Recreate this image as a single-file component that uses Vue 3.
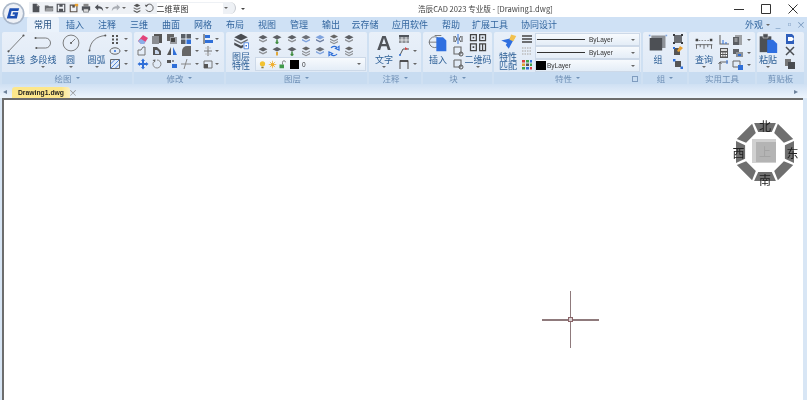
<script setup>
const b = '#2f6fd8'
const icons = {
  doc: `<path d="M2 1h5l3 3v7H2z" fill="#4f5258"/><path d="M7 1v3h3" fill="#bbb"/>`,
  folder: `<path d="M1 3h4l1 1h5v6H1z" fill="#6a6c70"/><path d="M3 6h8l-1 4H1z" fill="#9a9c9f"/>`,
  save: `<path d="M1.500 1.500h9v9h-9z" fill="none" stroke="#4f5258" stroke-width="1.400"/><path d="M4 1.500h4v3H4zM3.500 7h5v3.500h-5z" fill="#4f5258"/>`,
  saveas: `<path d="M1.500 2.500h8v8h-8z" fill="none" stroke="#5a5048" stroke-width="1.300"/><path d="M4 2.500h3v3H4z" fill="#5a5048"/><path d="M7 1h4v3H7z" fill="#e8a030"/>`,
  print: `<path d="M3 1h6v3H3z" fill="#888"/><path d="M1 4h10v5H1z" fill="#4f5258"/><path d="M3 7h6v4H3z" fill="#ddd" stroke="#4f5258" stroke-width=".7"/>`,
  undo: `<path d="M1 5l4-3.500V4c3 0 6 1 6 6-1-3-3-3.500-6-3.500V9z" fill="#4f5258"/>`,
  redo: `<path d="M11 5L7 1.500V4C4 4 1 5 1 10c1-3 3-3.500 6-3.500V9z" fill="#a9adb3"/>`,
  stack: `<path d="M6 1l4 2-4 2-4-2z" fill="#555"/><path d="M2 5l4 2 4-2v1.500L6 8.500 2 6.500z" fill="#777"/><path d="M2 8.500l4 2 4-2V10l-4 2-4-2z" fill="#555"/>`,
  arc: `<path d="M3 3a4.500 4.500 0 1 1-.5 5" fill="none" stroke="#555" stroke-width="1.100"/><path d="M1 2l4 .500L2.500 5z" fill="#555"/>`,
  dots: `<path d="M3 2h2v2H3zM7 2h2v2H7zM3 5.500h2v2H3zM7 5.500h2v2H7zM3 9h2v2H3zM7 9h2v2H7z" fill="#555"/>`,
  ellipse: `<ellipse cx="6" cy="6" rx="5" ry="3.200" fill="none" stroke="#666" stroke-width="1"/><circle cx="6" cy="6" r="1" fill="${b}"/>`,
  hatch: `<path d="M1.500 1.500h9v9h-9z" fill="none" stroke="#666" stroke-width="1"/><path d="M1.500 6l4.500-4.500M1.500 10.500l9-9M6 10.500l4.500-4.500" stroke="${b}" stroke-width=".8"/>`,
  eraser: `<path d="M1 8l5-6 5 3-4 6H4z" fill="#e2437a"/><path d="M1 8l3 3h3l1.500-2.300L4 6z" fill="#8ab0e8"/>`,
  copy: `<path d="M3 1h8v9H3z" fill="#555"/><path d="M1 3h7v8H1z" fill="#8a8d92"/>`,
  copy2: `<path d="M1 1h7v7H1z" fill="#666"/><path d="M4 4h7v7H4z" fill="#9a9da2"/><path d="M5 5h4v4H5z" fill="#444"/>`,
  blocks: `<path d="M1 1h4.500v4.500H1z" fill="#5a6068"/><path d="M6.500 1H11v4.500H6.500zM1 6.500h4.500V11H1z" fill="#5a6068"/><path d="M6.500 6.500H11V11H6.500z" fill="${b}"/>`,
  align: `<path d="M2 1v10" stroke="#555" stroke-width="1.200"/><path d="M3 2h5v3H3z" fill="${b}"/><path d="M3 7h8v3H3z" fill="${b}"/>`,
  offset: `<path d="M1 10V5h3l2-3h2v8z" fill="none" stroke="#777" stroke-width="1"/>`,
  rotate3: `<path d="M2 2h4l4 4v4H2z" fill="#555"/><path d="M4 5h2l2 2v2H4z" fill="#c9d8ee"/>`,
  mirror: `<path d="M5 2v8H1z" fill="#555"/><path d="M7 2v8h4z" fill="${b}"/>`,
  fillet: `<path d="M2 11V6a5 5 0 0 1 5-5h4v10z" fill="#666"/>`,
  vsplit: `<path d="M6 1v10M2 6h8" stroke="#777" stroke-width="1"/><path d="M3 3h6M3 9h6" stroke="#bbb" stroke-width=".8"/>`,
  move: `<path d="M6 .500l2 2.500H7v2h2V4l2.500 2L9 8V7H7v2h1l-2 2.500L4 9h1V7H3v1L.5 6 3 4v1h2V3H4z" fill="${b}"/>`,
  circ: `<path d="M6 2a4 4 0 1 1-3.500 2" fill="none" stroke="#888" stroke-width="1"/><path d="M1.500 2l3-.500L4 4.500z" fill="#666"/>`,
  array: `<path d="M1 2h4v3H1z" fill="#555"/><path d="M6 6h5v4H6z" fill="${b}"/><path d="M6 2h2v2H6z" fill="#8a8d92"/>`,
  trim: `<path d="M7 1L4 11M1 6h10" stroke="#888" stroke-width="1"/>`,
  box: `<path d="M2 3h8v7H2z" fill="none" stroke="#777" stroke-width="1"/><path d="M2 6h4v4H2z" fill="#555"/>`,
  layerA: `<path d="M6 2l4.500 2.200L6 6.400 1.500 4.200z" fill="#5c5f64"/><path d="M2 6l4 2 4-2v1.500l-4 2-4-2z" fill="#8d9094"/>`,
  layerB: `<path d="M6 2l4.500 2.200L6 6.400 1.500 4.200z" fill="#5c5f64"/><path d="M6 6.500v4.500M4.500 9.500h3" stroke="#3f8c3f" stroke-width="1.500"/>`,
  layerC: `<path d="M6 2l4.500 2.200L6 6.400 1.500 4.200z" fill="#6c7077"/><path d="M2 6l4 2 4-2v1.500l-4 2-4-2z" fill="#7fa3dd"/>`,
  layerD: `<path d="M6 2l4.500 2.200L6 6.400 1.500 4.200z" fill="#7fa3dd"/><path d="M2 6l4 2 4-2v1.500l-4 2-4-2z" fill="#6c7ea0"/>`,
  layerE: `<path d="M6 1.500l4 2-4 2-4-2z" fill="#666"/><path d="M2 5.500l4 2 4-2v1.300l-4 2-4-2zM2 8l4 2 4-2v1.300l-4 2-4-2z" fill="#8b8e92"/>`,
  layerF: `<path d="M6 2l4.500 2.200L6 6.400 1.500 4.200z" fill="#5c5f64"/><path d="M6 7v3.500" stroke="#e0a83a" stroke-width="2"/>`,
  layerG: `<path d="M3 3a4 4 0 0 1 6-.500l-1.500 1L11 5V1.500L10 2.300" fill="none" stroke="${b}" stroke-width="1.200"/><path d="M9 9a4 4 0 0 1-6 .500l1.500-1L1 7v3.500l1-.800" fill="none" stroke="${b}" stroke-width="1.200"/>`,
  table: `<path d="M1 2h10v8H1z" fill="#8e9298"/><path d="M1 2h10v2H1z" fill="#50555c"/><path d="M4 4v6M8 4v6M1 7h10" stroke="#fff" stroke-width=".7"/>`,
  leader: `<path d="M2 10L5 4h6" fill="none" stroke="#555" stroke-width="1"/><path d="M7 2l3 2-3 1z" fill="#d64545"/><circle cx="2" cy="10" r="1" fill="${b}"/>`,
  dim: `<path d="M2 11V3h8v8" fill="none" stroke="#666" stroke-width="1.200"/><path d="M2 3h8" stroke="#333" stroke-width="1.500"/>`,
  attr: `<path d="M2 3v6M10 3v6M3 3l2 3-2 3M9 3L7 6l2 3" stroke="#555" stroke-width="1" fill="none"/><path d="M6 1v10" stroke="${b}" stroke-width="1"/>`,
  blockA: `<path d="M2 2h7v7" fill="none" stroke="#666" stroke-width="1.100"/><path d="M2 2v7h7" fill="none" stroke="#666" stroke-width="1.100"/><circle cx="9" cy="9" r="2" fill="none" stroke="#555"/>`,
  matchA: `<path d="M1 3h10M1 6h10M1 9h10" stroke="#444" stroke-width="1.700"/>`,
  matchB: `<path d="M1 3h10M1 6h10M1 9h10" stroke="#bcbcbc" stroke-width="1.700" stroke-dasharray="1.500 1"/>`,
  matchC: `<path d="M1 2h3v2.500H1z" fill="#d94040"/><path d="M5 2h3v2.500H5z" fill="#3fa34a"/><path d="M9 2h2v2.500H9z" fill="#2f6fd8"/><path d="M1 5.500h3V8H1z" fill="#e0a030"/><path d="M5 5.500h3V8H5z" fill="#555"/><path d="M9 5.500h2V8H9z" fill="#3fa34a"/><path d="M1 9h3v2.500H1z" fill="#3fa34a"/><path d="M5 9h3v2.500H5z" fill="#2f6fd8"/><path d="M9 9h2v2.500H9z" fill="#d94040"/>`,
  gA: `<path d="M2 2h8v8H2z" fill="#6a6d72"/><path d="M1 1h2v2H1zM9 1h2v2H9zM1 9h2v2H1zM9 9h2v2H9z" fill="#3a3c40"/>`,
  gB: `<path d="M2 3h6v7H2z" fill="#555"/><path d="M8 1l3 2-4 4-2-1z" fill="#e8a030"/><path d="M1 2h2v2H1z" fill="${b}"/>`,
  gC: `<path d="M3 3h6v6H3z" fill="#555"/><path d="M1 1h2.500v2.500H1zM8.500 8.500H11V11H8.500z" fill="${b}"/>`,
  ang: `<path d="M2 1v9h9" fill="none" stroke="#666" stroke-width="1.100"/><path d="M5 6v4M8 8v2" stroke="${b}" stroke-width="1"/>`,
  calc: `<path d="M2 1h8v10H2z" fill="#555"/><path d="M3 2h6v2H3z" fill="#ddd"/><path d="M3 5.500h1.500V7H3zM5.300 5.500h1.500V7H5.300zM7.500 5.500H9V7H7.500zM3 8h1.500v1.500H3zM5.300 8h1.500v1.500H5.300zM7.500 8H9v1.500H7.500z" fill="#fff"/>`,
  coord: `<path d="M2 11V3h8M2 3L.5 5M2 3l1.500 2" stroke="#666" stroke-width="1" fill="none"/><path d="M9 1v4" stroke="${b}"/>`,
  listA: `<path d="M3 1h7v10H3z" fill="#a0a3a7"/><path d="M1 3h6v8H1z" fill="#5a5d62"/><path d="M2.500 5h3M2.500 7h3" stroke="#fff" stroke-width=".7"/>`,
  listB: `<path d="M1 2h6v5H1z" fill="#606368"/><path d="M4 5h7v5H4z" fill="#8e9298"/><path d="M6 7h3v2H6z" fill="${b}"/>`,
  listC: `<path d="M1 2h7v6H1z" fill="none" stroke="#666" stroke-width="1"/><path d="M6 6h5v5H6z" fill="${b}"/>`,
  cutA: `<path d="M2 1h6l2 2v8H2z" fill="#2f5fbb"/><path d="M4 4h4l2 2-2 2H4z" fill="#fff"/>`,
  scissors: `<path d="M2 2l8 8M10 2l-8 8" stroke="#4a4d52" stroke-width="1.500"/>`,
  pasteB: `<path d="M1 1h6v7H1z" fill="#777"/><path d="M4 4h7v7H4z" fill="#484b50"/>`
}

const tabs = [
  { t: '常用', w: 32 }, { t: '插入', w: 32 }, { t: '注释', w: 32 }, { t: '三维', w: 32 },
  { t: '曲面', w: 32 }, { t: '网格', w: 32 }, { t: '布局', w: 32 }, { t: '视图', w: 32 },
  { t: '管理', w: 32 }, { t: '输出', w: 32 }, { t: '云存储', w: 36 }, { t: '应用软件', w: 54 },
  { t: '帮助', w: 28 }, { t: '扩展工具', w: 50 }, { t: '协同设计', w: 48 }
]
const quick = ['doc', 'folder', 'save', 'saveas', 'print']

const drawSmall = ['dots', 'ellipse', 'hatch']
const modify = [
  ['eraser', 'copy', 'copy2', 'blocks', 'align'],
  ['offset', 'rotate3', 'mirror', 'fillet', 'vsplit'],
  ['move', 'circ', 'array', 'trim', 'box']
]
const layers = [
  'layerA', 'layerB', 'layerA', 'layerC', 'layerD', 'layerE', 'layerA',
  'layerA', 'layerF', 'layerB', 'layerE', 'layerC', 'layerG', 'layerE'
]
const utilSmall = ['ang', 'listA', 'calc', 'listB', 'coord', 'listC']

// the eight ring pieces of the compass
const pt = (r, deg) => {
  const a = (deg * Math.PI) / 180
  return (35 + r * Math.cos(a)).toFixed(1) + ',' + (35 + r * Math.sin(a)).toFixed(1)
}
const ring = Array.from({ length: 8 }, (_, i) => {
  const c = i * 45 - 90
  return [pt(31, c - 20.5), pt(31, c + 20.5), pt(21, c + 19), pt(21, c - 19)].join(' ')
})
</script>

<template>
  <div class="app">
    <!-- logo sits over both the title bar and the tab strip -->
    <svg class="logo" viewBox="0 0 24 24">
      <circle cx="12" cy="12" r="11.500" fill="#a9b6c8" />
      <circle cx="12" cy="12" r="9.800" fill="#eef1f6" />
      <path d="M8 6.500h10l-1 3h-7l-1.300 5h4.300l.4-1.500h-2.500l.6-2.300H17l-1.500 6.500H5z" fill="#1d4fb4" />
    </svg>

    <header class="titlebar">
      <div class="quick">
        <svg v-for="q in quick" :key="q" class="ic q" viewBox="0 0 12 12" v-html="icons[q]"></svg>
        <svg class="ic q" viewBox="0 0 12 12" v-html="icons.undo"></svg>
        <i class="caret"></i>
        <svg class="ic q" viewBox="0 0 12 12" v-html="icons.redo"></svg>
        <i class="caret"></i>
        <svg class="ic q stack" viewBox="0 0 12 12" v-html="icons.stack"></svg>
        <svg class="ic q" viewBox="0 0 12 12" v-html="icons.arc"></svg>
        <span class="workspace">二维草图</span>
        <i class="caret"></i>
      </div>
      <i class="caret solo"></i>
      <div class="doc-title">浩辰CAD 2023 专业版 - [Drawing1.dwg]</div>
      <div class="win">
        <svg viewBox="0 0 12 12"><path d="M1 6.500h10" stroke="#333" /></svg>
        <svg viewBox="0 0 12 12"><path d="M1.500 1.500h9v9h-9z" fill="none" stroke="#333" /></svg>
        <svg viewBox="0 0 12 12"><path d="M1.500 1.500l9 9M10.500 1.500l-9 9" stroke="#333" /></svg>
      </div>
    </header>

    <nav class="tabs">
      <span v-for="(t, i) in tabs" :key="t.t" class="tab" :class="{ active: i === 0 }" :style="{ width: t.w + 'px' }">{{ t.t }}</span>
      <div class="look">
        <span>外观</span><i class="caret"></i>
        <span class="mini">_</span><span class="mini">▫</span><span class="mini">×</span>
      </div>
    </nav>

    <section class="ribbon">
      <div class="panel" style="width: 130px">
        <div class="body">
          <div class="big" style="width: 26px">
            <svg viewBox="0 0 24 24"><path d="M3 22L21 3" stroke="#666" /><circle cx="3" cy="22" r="1.300" fill="#555" /><circle cx="21" cy="3" r="1.300" fill="#555" /></svg>
            <span>直线</span>
          </div>
          <div class="big" style="width: 28px">
            <svg viewBox="0 0 24 24"><path d="M3 6h12a6 6 0 0 1 0 12H4" fill="none" stroke="#666" /><circle cx="3" cy="6" r="1.200" fill="#555" /><circle cx="4" cy="18" r="1.200" fill="#555" /></svg>
            <span>多段线</span><i class="caret"></i>
          </div>
          <div class="big" style="width: 27px">
            <svg viewBox="0 0 24 24"><circle cx="12" cy="12" r="9.500" fill="none" stroke="#666" /><path d="M12 12l5-5" stroke="#666" /><circle cx="12" cy="12" r="1.200" fill="#555" /></svg>
            <span>圆</span><i class="caret"></i>
          </div>
          <div class="big" style="width: 25px">
            <svg viewBox="0 0 24 24"><path d="M3 21C4 10 11 4 22 3" fill="none" stroke="#666" /><circle cx="3" cy="21" r="1.200" fill="#555" /><circle cx="22" cy="3" r="1.200" fill="#555" /></svg>
            <span>圆弧</span><i class="caret"></i>
          </div>
          <div class="rows">
            <div v-for="s in drawSmall" :key="s" class="row">
              <svg class="ic" viewBox="0 0 12 12" v-html="icons[s]"></svg><i class="caret"></i>
            </div>
          </div>
        </div>
        <div class="label">绘图<i class="caret"></i></div>
      </div>

      <div class="panel" style="width: 90px">
        <div class="body">
          <div class="rows wide">
            <div v-for="(r, i) in modify" :key="i" class="row">
              <svg v-for="(n, j) in r.slice(0, 4)" :key="j" class="ic m" viewBox="0 0 12 12" v-html="icons[n]"></svg>
              <i class="caret"></i>
              <svg class="ic" viewBox="0 0 12 12" v-html="icons[r[4]]"></svg>
              <i class="caret"></i>
            </div>
          </div>
        </div>
        <div class="label">修改<i class="caret"></i></div>
      </div>

      <div class="panel" style="width: 141px">
        <div class="body">
          <div class="big dbl" style="width: 28px">
            <svg viewBox="0 0 24 24">
              <path d="M12 1l9 4.500-9 4.500-9-4.500z" fill="#4a4d52" />
              <path d="M3 8l9 4.500L21 8v2l-9 4.500L3 10z" fill="#6a6d72" />
              <path d="M3 12.500l9 4.500 3-1.500V19l-3 1.500-9-4.500z" fill="#4a4d52" />
              <path d="M16 13h6v8h-6z" fill="#fff" stroke="#2f6fd8" />
              <path d="M18 16h2v2h-2z" fill="#2f6fd8" />
            </svg>
            <span class="two">图层<br>特性</span>
          </div>
          <div class="layer-side">
            <div class="layer-grid">
              <svg v-for="(n, i) in layers" :key="i" class="ic" viewBox="0 0 12 12" v-html="icons[n]"></svg>
            </div>
            <div class="combo layer-combo">
              <svg class="ic tiny" viewBox="0 0 12 12"><circle cx="6" cy="5" r="3.500" fill="#f2c230" /><path d="M4.500 9h3v2h-3z" fill="#8a7a3a" /></svg>
              <svg class="ic tiny" viewBox="0 0 12 12"><circle cx="6" cy="6" r="2.500" fill="#f0b030" /><path d="M6 1v10M1 6h10M2.500 2.500l7 7M9.500 2.500l-7 7" stroke="#f0b030" /></svg>
              <svg class="ic tiny" viewBox="0 0 12 12"><path d="M2 6h6v5H2z" fill="#3f9a4a" /><path d="M6 6V3a2 2 0 0 1 4 0" fill="none" stroke="#666" /></svg>
              <b class="swatch"></b>
              <span class="val">0</span>
              <i class="caret end"></i>
            </div>
          </div>
        </div>
        <div class="label">图层<i class="caret"></i></div>
      </div>

      <div class="panel" style="width: 52px">
        <div class="body">
          <div class="big" style="width: 28px">
            <span class="bigA">A</span>
            <span>文字</span><i class="caret"></i>
          </div>
          <div class="rows flush">
            <div class="row"><svg class="ic" viewBox="0 0 12 12" v-html="icons.table"></svg></div>
            <div class="row"><svg class="ic" viewBox="0 0 12 12" v-html="icons.leader"></svg><i class="caret"></i></div>
            <div class="row"><svg class="ic" viewBox="0 0 12 12" v-html="icons.dim"></svg><i class="caret"></i></div>
          </div>
        </div>
        <div class="label">注释<i class="caret"></i></div>
      </div>

      <div class="panel" style="width: 69px">
        <div class="body">
          <div class="big" style="width: 28px">
            <svg viewBox="0 0 24 24">
              <circle cx="8" cy="11" r="6.500" fill="none" stroke="#666" />
              <path d="M1 11h14M8 3h8" stroke="#666" />
              <path d="M10 5h8l4 4v13H10z" fill="#2f6fe0" />
            </svg>
            <span>插入</span>
          </div>
          <div class="rows flush">
            <div class="row"><svg class="ic" viewBox="0 0 12 12" v-html="icons.attr"></svg></div>
            <div class="row"><svg class="ic" viewBox="0 0 12 12" v-html="icons.blockA"></svg></div>
            <div class="row"><svg class="ic" viewBox="0 0 12 12" v-html="icons.blockA"></svg></div>
          </div>
          <div class="big" style="width: 28px">
            <svg viewBox="0 0 24 24">
              <g fill="none" stroke="#444" stroke-width="1.500">
                <path d="M3 2h7v7H3zM14 2h7v7h-7zM3 13h7v8H3z" />
                <path d="M14 13h7v8h-7zM17.500 13v8" />
              </g>
              <path d="M5.500 4.500h2v2h-2zM16.500 4.500h2v2h-2zM5.500 16h2v2h-2z" fill="#444" />
            </svg>
            <span>二维码</span><i class="caret"></i>
          </div>
        </div>
        <div class="label">块<i class="caret"></i></div>
      </div>

      <div class="panel" style="width: 147px">
        <div class="body">
          <div class="big dbl" style="width: 26px">
            <svg viewBox="0 0 24 24">
              <path d="M3 10l9 4 4-7z" fill="#2f6fe0" />
              <path d="M9 16l4 5 8-15-5-1z" fill="#2f6fe0" />
              <path d="M16 2l7 2-4 7-5-2z" fill="#f2c14e" />
            </svg>
            <span class="two">特性<br>匹配</span>
          </div>
          <div class="rows flush">
            <div class="row"><svg class="ic" viewBox="0 0 12 12" v-html="icons.matchA"></svg></div>
            <div class="row"><svg class="ic" viewBox="0 0 12 12" v-html="icons.matchB"></svg></div>
            <div class="row"><svg class="ic" viewBox="0 0 12 12" v-html="icons.matchC"></svg></div>
          </div>
          <div class="combos">
            <div class="combo"><b class="rule"></b><span class="val">ByLayer</span><i class="caret end"></i></div>
            <div class="combo"><b class="rule"></b><span class="val">ByLayer</span><i class="caret end"></i></div>
            <div class="combo"><b class="swatch big-swatch"></b><span class="val">ByLayer</span><i class="caret end"></i></div>
          </div>
        </div>
        <div class="label">特性<i class="caret"></i><em class="launcher"></em></div>
      </div>

      <div class="panel" style="width: 44px">
        <div class="body">
          <div class="big" style="width: 28px">
            <svg viewBox="0 0 24 24">
              <path d="M4 3h17v15H4z" fill="#8e9298" />
              <path d="M2 6h15v15H2z" fill="#4d5055" />
              <path d="M1 2h2v2H1zM21 2h2v2h-2z" fill="#7fa3dd" />
            </svg>
            <span>组</span>
          </div>
          <div class="rows flush">
            <div class="row"><svg class="ic" viewBox="0 0 12 12" v-html="icons.gA"></svg></div>
            <div class="row"><svg class="ic" viewBox="0 0 12 12" v-html="icons.gB"></svg></div>
            <div class="row"><svg class="ic" viewBox="0 0 12 12" v-html="icons.gC"></svg></div>
          </div>
        </div>
        <div class="label">组<i class="caret"></i></div>
      </div>

      <div class="panel" style="width: 66px">
        <div class="body">
          <div class="big" style="width: 28px">
            <svg viewBox="0 0 24 24">
              <path d="M2 9h20" stroke="#777" stroke-dasharray="2 1.500" />
              <path d="M2 7h3v3H2zM19 7h3v3h-3z" fill="#444" />
              <path d="M2 14h20M3 14v5M7.500 14v3M12 14v5M16.500 14v3M21 14v5" stroke="#555" fill="none" />
            </svg>
            <span>查询</span><i class="caret"></i>
          </div>
          <div class="util-grid">
            <div v-for="(n, i) in utilSmall" :key="i" class="row">
              <svg class="ic" viewBox="0 0 12 12" v-html="icons[n]"></svg><i v-if="i % 2" class="caret"></i>
            </div>
          </div>
        </div>
        <div class="label">实用工具</div>
      </div>

      <div class="panel" style="width: 47px">
        <div class="body">
          <div class="big" style="width: 20px">
            <svg viewBox="0 0 24 24">
              <path d="M2 4h14v19H2z" fill="#4d5055" />
              <path d="M6 1h6v5H6z" fill="#4d5055" stroke="#eee" stroke-width=".6" />
              <path d="M11 8h7l5 5v11H11z" fill="#2f6fe0" />
            </svg>
            <span>粘贴</span><i class="caret"></i>
          </div>
          <div class="rows far">
            <div class="row"><svg class="ic" viewBox="0 0 12 12" v-html="icons.cutA"></svg></div>
            <div class="row"><svg class="ic" viewBox="0 0 12 12" v-html="icons.scissors"></svg></div>
            <div class="row"><svg class="ic" viewBox="0 0 12 12" v-html="icons.pasteB"></svg></div>
          </div>
        </div>
        <div class="label">剪贴板</div>
      </div>
    </section>

    <div class="docbar">
      <span class="arrow">◂</span>
      <div class="doctab">Drawing1.dwg</div>
      <span class="doc-x">×</span>
      <span class="arrow right">▸</span>
    </div>

    <main class="canvas">
      <div class="cross">
        <i class="ch"></i><i class="cv"></i><i class="cc"></i>
      </div>
      <div class="cube">
        <svg viewBox="0 0 70 70" width="70" height="70">
          <polygon v-for="(p, i) in ring" :key="i" :points="p" fill="#6f6f6f" />
          <rect x="22" y="22" width="24" height="24" fill="#d0d0d0" />
          <rect x="26" y="25" width="20" height="20" fill="#b4b4b4" />
        </svg>
        <span class="dir n">北</span>
        <span class="dir e">东</span>
        <span class="dir s">南</span>
        <span class="dir w">西</span>
        <span class="dir c">上</span>
      </div>
    </main>
  </div>
</template>

<style>
html, body { margin: 0; background: #fff; overflow: hidden; }
</style>

<style scoped>
.app {
  position: relative;
  width: 807px;
  height: 400px;
  display: flex;
  flex-direction: column;
  font-family: "Noto Sans CJK SC", "Noto Sans", sans-serif;
  font-size: 9px;
  color: #2d5f96;
  background: #d8e6f5;
  overflow: hidden;
  filter: blur(.35px);
}
.logo { position: absolute; left: 2px; top: 2px; width: 23px; height: 23px; z-index: 3; }
.caret {
  display: inline-block;
  width: 0; height: 0;
  border-left: 2px solid transparent;
  border-right: 2px solid transparent;
  border-top: 2px solid #666;
  flex: none;
}
.ic { width: 12px; height: 12px; flex: none; display: block; }

.titlebar {
  height: 17px;
  background: #fff;
  display: flex;
  align-items: center;
  padding-left: 29px;
  color: #444;
}
.quick {
  width: 207px;
  height: 12px;
  box-sizing: border-box;
  margin-top: -1px;
  padding-left: 2px;
  display: flex;
  align-items: center;
  gap: 2.500px;
  background: #eef1f5;
  border-radius: 0 7px 7px 0;
  border-right: 1px solid #c5c9cf;
}
.q { width: 10px; height: 10px; }
.q.stack { margin-left: 4px; }
.quick .caret { margin: 0 -1px; }
.workspace {
  width: 66px;
  background: #fff;
  color: #333;
  line-height: 11px;
  font-size: 8px;
}
.solo { margin-left: 5px; border-top-color: #444; }
.doc-title {
  margin-left: 173px;
  width: 200px;
  font-size: 7.600px;
  color: #444;
  white-space: nowrap;
}
.win { margin-left: auto; display: flex; gap: 15px; padding-right: 8px; }
.win svg { width: 12px; height: 12px; }

.tabs {
  height: 15px;
  padding-left: 27px;
  display: flex;
  align-items: center;
  background: #cfe1f5;
  color: #33669f;
}
.tab { text-align: center; line-height: 15px; flex: none; }
.tab.active { background: #eaf2fb; color: #234f80; border-radius: 2px 2px 0 0; }
.look {
  margin-left: auto;
  display: flex;
  align-items: center;
  gap: 1.500px;
  padding-right: 1px;
}
.look .caret { margin: 0 2px 0 1px; }
.mini { width: 10px; text-align: center; color: #6b8db5; font-size: 9px; }

.ribbon {
  height: 52px;
  padding-left: 2px;
  display: flex;
  gap: 2px;
  background: #cfe0f2;
  box-sizing: border-box;
}
.panel {
  flex: none;
  display: flex;
  flex-direction: column;
  background: linear-gradient(#e9f0f9, #dde8f5);
  border-radius: 2px;
}
.body { height: 40px; display: flex; padding: 1px 1px 0; box-sizing: border-box; overflow: hidden; }
.label {
  height: 12px;
  line-height: 12px;
  background: #c8dcf1;
  color: #6f90b6;
  display: flex;
  justify-content: center;
  align-items: center;
  gap: 4px;
  font-size: 8.500px;
  position: relative;
}
.label .caret { border-top-color: #6f90b6; }
.launcher {
  position: absolute; right: 3px; top: 4px;
  width: 4px; height: 4px;
  border: 1px solid #7f9cbf;
}
.big {
  flex: none;
  display: flex;
  flex-direction: column;
  align-items: center;
  line-height: 9px;
  white-space: nowrap;
}
.big svg { width: 20px; height: 20px; flex: none; margin-bottom: 1px; }
.big span { margin-top: 1px; }
.big .caret { margin-top: 2px; }
.big.dbl svg { width: 18px; height: 18px; margin-bottom: 0; }
.big .two { line-height: 9px; margin-top: 1px; }
.bigA {
  font: 700 20px/20px "Liberation Sans", sans-serif;
  color: #50545a;
  margin-top: 0 !important;
  height: 20px;
  margin-bottom: 1px;
}
.rows { display: flex; flex-direction: column; justify-content: space-around; height: 37px; }
.rows.flush { padding-left: 0; }
.rows.far { padding-left: 6px; }
.row { display: flex; align-items: center; gap: 3px; }
.rows.wide { padding-left: 2px; }
.rows.wide .row { gap: 0; }
.m { margin-right: 2.300px; }
.rows.wide .caret { margin: 0 3px 0 1px; }
.layer-side { flex: none; width: 111px; }
.layer-grid {
  display: grid;
  grid-template-columns: repeat(7, 14.300px);
  grid-auto-rows: 12px;
  height: 24px;
  padding-left: 2px;
}
.combo {
  display: flex;
  align-items: center;
  height: 13px;
  box-sizing: border-box;
  background: linear-gradient(#f7fafd, #e4edf7);
  border: 1px solid #cdd9e8;
  color: #333;
  font-size: 6.500px;
  font-family: "Liberation Sans", sans-serif;
}
.layer-combo { height: 14px; gap: 1px; padding-left: 2px; }
.tiny { width: 9px; height: 9px; }
.swatch { width: 9px; height: 9px; background: #000; flex: none; margin: 0 2px; }
.big-swatch { width: 10px; margin: 0 1px 0 0; }
.val { white-space: nowrap; }
.end { margin-left: auto; margin-right: 4px; }
.combos { flex: none; width: 105px; display: flex; flex-direction: column; margin-left: 2px; }
.rule { width: 48px; height: 1px; background: #333; margin: 0 4px 0 1px; flex: none; }
.util-grid { display: grid; grid-template-columns: 14px 18px; grid-auto-rows: 12.500px; padding-top: 1px; }

.docbar {
  height: 14px;
  display: flex;
  align-items: flex-end;
  background: linear-gradient(#cfe0f3, #edf4fc);
  padding-left: 3px;
  color: #6a7f99;
  box-sizing: border-box;
}
.arrow { width: 8px; font-size: 8px; line-height: 12px; align-self: center; }
.arrow.right { margin-left: auto; margin-right: 5px; }
.doctab {
  margin-left: 1px;
  width: 58px;
  height: 11px;
  background: linear-gradient(90deg, #fde78c 85%, #fdf0bd);
  border-radius: 3px 3px 0 0;
  color: #1e1e1e;
  font: 700 6.800px/11px "Liberation Sans", sans-serif;
  text-align: center;
}
.doc-x { margin-left: -2px; color: #888; line-height: 11px; font-size: 9px; width: 10px; text-align: center; }

.canvas {
  flex: 1;
  position: relative;
  background: #fff;
  margin: 0 4px 0 2px;
  border-top: 2px solid #6d6d6d;
  border-left: 2px solid #6d6d6d;
}
.cross { position: absolute; left: 537.500px; top: 191px; width: 57px; height: 57px; }
.cross i { position: absolute; background: #8f7a7c; }
.ch { left: 0; right: 0; top: 28px; height: 1.500px; }
.cv { top: 0; bottom: 0; left: 28px; width: 1.500px; }
.cc { left: 26px; top: 26px; width: 5px; height: 5px; background: #d8cfd0 !important; border: 1px solid #8a6468; box-sizing: border-box; }
.cube { position: absolute; left: 726px; top: 17px; width: 70px; height: 70px; }
.dir { position: absolute; font-size: 12px; line-height: 13px; width: 13px; text-align: center; color: #222; }
.n { left: 28.500px; top: 2px; }
.s { left: 28.500px; top: 56px; }
.e { left: 56px; top: 29px; }
.w { left: 2px; top: 29px; }
.c { left: 28.500px; top: 28px; color: #a4a4a4; }
</style>
